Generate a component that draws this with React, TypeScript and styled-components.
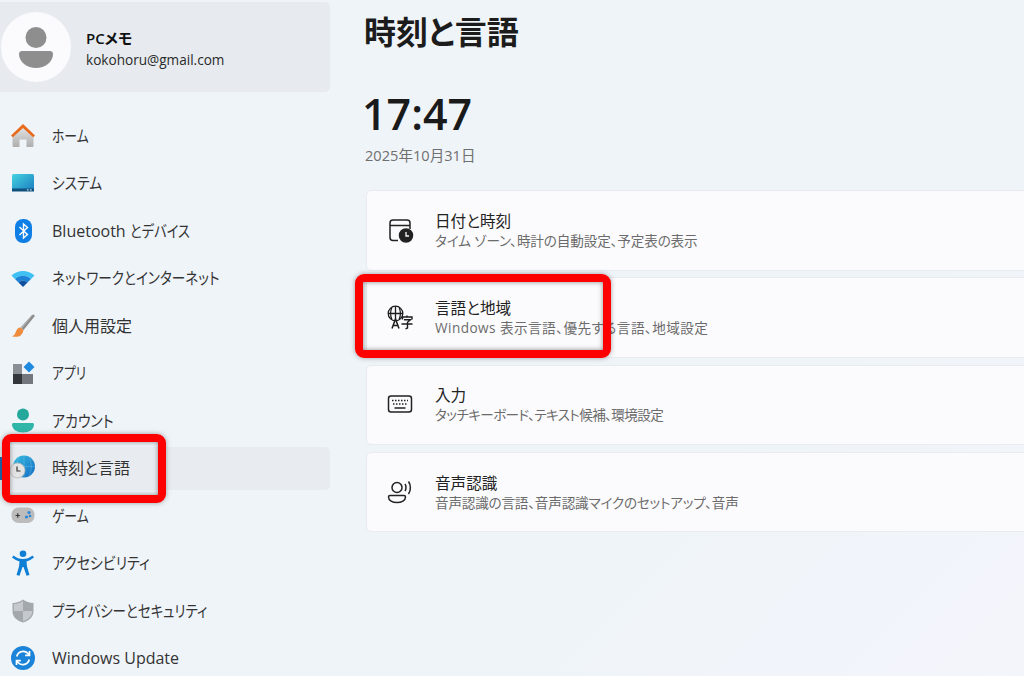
import styled, { createGlobalStyle } from 'styled-components';
import { ReactNode } from 'react';

const GlobalStyle = createGlobalStyle`
  html, body {
    margin: 0;
    padding: 0;
    overflow: hidden;
    background: #eff4f9;
  }
`;

const Shell = styled.div`
  position: relative;
  display: grid;
  grid-template-columns: 330px 1fr;
  width: 1024px;
  height: 676px;
  overflow: hidden;
  background: linear-gradient(135deg, #eff4f9 0%, #eff4f9 70%, #f3f5fb 100%);
  font-family: 'Open Sans', 'Noto Sans CJK JP', sans-serif;
  font-feature-settings: 'palt';
  color: #1b1b1b;
`;

const Sidebar = styled.aside`
  display: flex;
  flex-direction: column;
  padding-top: 2px;
`;

const Profile = styled.div`
  display: flex;
  align-items: center;
  gap: 15px;
  height: 90px;
  background: #e7ebef;
  border-radius: 0 5px 5px 0;
`;

const Avatar = styled.div`
  display: flex;
  align-items: center;
  justify-content: center;
  width: 70px;
  height: 70px;
  margin-left: 1px;
  border-radius: 50%;
  background: #fbfbfd;
`;

const ProfileText = styled.div`
  display: flex;
  flex-direction: column;
  gap: 2px;
  padding-top: 3px;
`;

const ProfileName = styled.div`
  font-size: 15px;
  font-weight: 600;
  line-height: 20px;
  color: #111;
`;

const ProfileMail = styled.div`
  font-size: 13.6px;
  line-height: 19px;
  color: #2a2a2a;
`;

const NavList = styled.nav`
  display: flex;
  flex-direction: column;
  margin-top: 20px;
`;

const NavRow = styled.div<{ $selected?: boolean }>`
  position: relative;
  display: flex;
  align-items: center;
  gap: 16px;
  height: 47.5px;
  padding-left: 10px;
  font-size: 16px;
  color: #333;
  box-sizing: border-box;
  ${(p) =>
    p.$selected &&
    `
    &::before {
      content: '';
      position: absolute;
      inset: 2px 0 2px 0;
      background: #e8ecf0;
      border-radius: 0 5px 5px 0;
    }
    &::after {
      content: '';
      position: absolute;
      left: 0;
      top: 12px;
      width: 2px;
      height: 23px;
      background: #0f5fb0;
    }
    & > * { position: relative; }
  `}
`;

const NavIcon = styled.span`
  display: flex;
  width: 26px;
  height: 26px;
  flex: none;
`;

const NavLabel = styled.span<{ $latin?: boolean }>`
  padding-bottom: ${(p) => (p.$latin ? '0' : '2px')};
  white-space: pre;
`;

// the reference font has much narrower kana than Noto, so squeeze those runs
const Kana = styled.span<{ $scale: number }>`
  display: inline-block;
  transform: scaleX(${(p) => p.$scale});
  transform-origin: left center;
`;

const Main = styled.main`
  display: flex;
  flex-direction: column;
  padding-left: 35px;
  overflow: hidden;
`;

const PageTitle = styled.h1`
  margin: 10px 0 0 -1px;
  font-size: 32px;
  font-weight: 600;
  line-height: 44px;
  color: #1c1c1c;
`;

const Clock = styled.div`
  margin: 31px 0 0 -3px;
  font-size: 43px;
  font-weight: 600;
  line-height: 58px;
  color: #1a1a1a;
`;

const DateText = styled.div`
  margin-top: 2px;
  font-size: 14.6px;
  line-height: 20px;
  color: #6f6f6f;
`;

const CardList = styled.div`
  display: flex;
  flex-direction: column;
  gap: 6.8px;
  margin: 25px 0 0 1px;
`;

const Card = styled.div`
  display: flex;
  align-items: center;
  gap: 21px;
  flex: none;
  width: 720px;
  height: 80.5px;
  padding-left: 20px;
  box-sizing: border-box;
  background: #fbfbfd;
  border: 1px solid #e8ebef;
  border-radius: 5px;
`;

const CardIcon = styled.span`
  display: flex;
  width: 27px;
  height: 27px;
  flex: none;
`;

const CardText = styled.div`
  display: flex;
  flex-direction: column;
`;

const CardTitle = styled.div`
  font-size: 15.6px;
  line-height: 21px;
  color: #222;
`;

const CardSub = styled.div<{ $track: number }>`
  font-size: 13.6px;
  line-height: 18px;
  letter-spacing: ${(p) => p.$track}px;
  color: #6b6b6b;
`;

const RedFrame = styled.div<{ $x: number; $y: number; $w: number; $h: number }>`
  position: absolute;
  left: ${(p) => p.$x}px;
  top: ${(p) => p.$y}px;
  width: ${(p) => p.$w}px;
  height: ${(p) => p.$h}px;
  box-sizing: border-box;
  border: 8px solid #fe0000;
  border-radius: 9px;
  box-shadow: 0 0 5px rgba(90, 90, 90, 0.55), inset 0 0 5px rgba(70, 70, 70, 0.6);
  pointer-events: none;
`;

const HomeIcon = () => (
  <svg viewBox="0 0 26 26" width="26" height="26">
    <defs>
      <linearGradient id="homeBody" x1="0" y1="0" x2="0" y2="1">
        <stop offset="0" stopColor="#e6e6e6" />
        <stop offset="1" stopColor="#aeaeae" />
      </linearGradient>
    </defs>
    <path d="M2.500 12 13 3l10.500 9v11a1 1 0 0 1-1 1H16.500V16.500h-7V24H3.500a1 1 0 0 1-1-1z" fill="url(#homeBody)" />
    <path d="M1 12.500 13 1l12 11.500-1.800 1.800L13 5 2.800 14.300z" fill="#ea6a1c" />
  </svg>
);

const SystemIcon = () => (
  <svg viewBox="0 0 26 26" width="26" height="26">
    <defs>
      <linearGradient id="sysScreen" x1="0" y1="0" x2="1" y2="1">
        <stop offset="0" stopColor="#45d3e0" />
        <stop offset="1" stopColor="#1a7cc0" />
      </linearGradient>
    </defs>
    <rect x="2" y="4" width="22" height="17" rx="1.500" fill="url(#sysScreen)" />
    <rect x="2" y="18.500" width="22" height="3" fill="#10507f" />
    <rect x="17" y="19.300" width="1.600" height="1.200" fill="#cfe4f0" />
    <rect x="20" y="19.300" width="1.600" height="1.200" fill="#cfe4f0" />
  </svg>
);

const BluetoothIcon = () => (
  <svg viewBox="0 0 26 26" width="26" height="26">
    <rect x="5" y="1" width="17" height="24" rx="8" fill="#0f7fe6" />
    <path d="m9.500 9 8 7.500-4 3.500V6l4 3.500-8 7.500" fill="none" stroke="#fff" strokeWidth="1.400" />
  </svg>
);

const WifiIcon = () => (
  <svg viewBox="0 0 26 26" width="26" height="26">
    <path d="M1.500 10.500C8 4.500 18 4.500 24.500 10.500L21 14C16 9.800 10 9.800 5 14z" fill="#3fc0f2" />
    <path d="M5 14c5-4.200 11-4.200 16 0l-3.500 3.500c-3-2.300-6-2.300-9 0z" fill="#1d82d6" />
    <path d="M8.500 17.500c3-2.300 6-2.300 9 0L13 22z" fill="#11509e" />
  </svg>
);

const BrushIcon = () => (
  <svg viewBox="0 0 26 26" width="26" height="26">
    <path d="M23.500 1.500c1 .5 1.300 1.300 1 2L13.500 17l-3-2.500L22 2z" fill="#8c8c8c" />
    <path d="M23.500 1.500 10.500 14.500l1.200 1z" fill="#b9b9b9" />
    <path d="M10.200 14.500 13.500 17c-.5 3-2.500 6-5 6.500-2 .4-4.500.3-6.500-.3 2.500-.8 3-2.500 3.800-4.500.8-2 2.400-4.200 4.400-4.200z" fill="#ef8b3c" />
  </svg>
);

const AppsIcon = () => (
  <svg viewBox="0 0 26 26" width="26" height="26">
    <rect x="3" y="4" width="9" height="10" fill="#8a8f96" />
    <rect x="3" y="14" width="9" height="10" fill="#33363b" />
    <rect x="12" y="14" width="11" height="10" fill="#74787e" />
    <path d="m19 1.500 5.500 5.500-5.500 5.500L13.500 7z" fill="#1f8be0" />
  </svg>
);

const AccountIcon = () => (
  <svg viewBox="0 0 26 26" width="26" height="26">
    <circle cx="13" cy="6.500" r="6" fill="#24a89c" />
    <path d="M3.500 15h19c.8 0 1.500.6 1.500 1.500 0 5-5 8-11 8s-11-3-11-8c0-.9.700-1.500 1.500-1.500z" fill="#2fb6a8" />
  </svg>
);

const TimeIcon = () => (
  <svg viewBox="0 0 26 26" width="26" height="26">
    <defs>
      <linearGradient id="globe" x1="0" y1="0" x2="1" y2="1">
        <stop offset="0" stopColor="#35bfe0" />
        <stop offset="1" stopColor="#1569c4" />
      </linearGradient>
    </defs>
    <circle cx="14" cy="11.500" r="11" fill="url(#globe)" />
    <path d="M14 .500v22M3 11.500h22M9 2c-3 6-3 13 0 19M19 2c3 6 3 13 0 19" fill="none" stroke="#7fcbe6" strokeWidth=".6" opacity=".6" />
    <circle cx="7.500" cy="15.500" r="7.500" fill="#e4e4e4" stroke="#b5b5b5" strokeWidth=".8" />
    <path d="M7 11.500v4.500h3.500" fill="none" stroke="#333" strokeWidth="1.200" />
  </svg>
);

const GameIcon = () => (
  <svg viewBox="0 0 26 26" width="26" height="26">
    <rect x="1.500" y="4.500" width="23" height="15.500" rx="7" fill="#bcbcbc" />
    <path d="M5.500 12.500h4.500M7.750 10.300v4.500" stroke="#3a3a3a" strokeWidth="1.200" />
    <circle cx="19" cy="9.500" r="1.600" fill="#2a86d8" />
    <circle cx="16.500" cy="14" r="1.600" fill="#2a86d8" />
    <circle cx="20" cy="13" r="1.300" fill="#2a86d8" />
  </svg>
);

const AccessIcon = () => (
  <svg viewBox="0 0 26 26" width="26" height="26">
    <circle cx="13" cy="3.800" r="3.300" fill="#0f7fd6" />
    <path d="M3.500 5.500c3 2.500 6 3.500 9.500 3.500s6.500-1 9.500-3.500l1.500 2c-2.500 2-5 3.300-7.500 4l.5 5 2.500 8.500-3 .8L13.500 17h-1L9.500 25.800l-3-.8L9 16.500l.5-5c-2.500-.7-5-2-7.500-4z" fill="#0f7fd6" />
  </svg>
);

const ShieldIcon = () => (
  <svg viewBox="0 0 26 26" width="26" height="26">
    <path d="M13 1.500c3 2.300 6.500 3.300 10.500 3.500v8.500c0 5-4 9-10.500 11-6.500-2-10.500-6-10.500-11V5c4-.2 7.500-1.200 10.500-3.500z" fill="#a3a8ad" />
    <path d="M13 2.800V13H3.800V6.200c3.500-.3 6.500-1.300 9.200-3.400zM13 13h9.200v.5c0 4.400-3.500 7.900-9.200 9.700z" fill="#c5c9cd" />
  </svg>
);

const UpdateIcon = () => (
  <svg viewBox="0 0 26 26" width="26" height="26">
    <circle cx="13" cy="13" r="12" fill="#1b83d8" />
    <path d="M6.800 11.500a6.500 6.500 0 0 1 11.200-3l1.500 1.600M19.500 6v4.300h-4.300M19.200 14.500a6.500 6.500 0 0 1-11.200 3l-1.500-1.600M6.500 20v-4.300h4.300" fill="none" stroke="#fff" strokeWidth="1.700" />
  </svg>
);

const CalendarClockIcon = () => (
  <svg viewBox="0 0 27 27" width="27" height="27" fill="none" stroke="#222" strokeWidth="1.500">
    <path d="M11 23.500H6a3 3 0 0 1-3-3V6a3 3 0 0 1 3-3h14a3 3 0 0 1 3 3v6M3 8.500h20" />
    <circle cx="19" cy="18.500" r="6.500" fill="#222" />
    <path d="M19 15v4h3" stroke="#fbfbfd" strokeWidth="1.300" />
  </svg>
);

const LanguageIcon = () => (
  <svg viewBox="0 0 27 27" width="27" height="27" fill="none" stroke="#1c1c1c" strokeWidth="1.300">
    <circle cx="8.500" cy="9.500" r="7.300" />
    <path d="M1.200 9.500h14.600M8.500 2.200v14.600M4.800 3.500c-1.600 4-1.600 8 0 12M12.200 3.500c1.600 4 1.600 8 0 12" />
    <path d="M5 24.500l3.500-9.500 3.500 9.500M6 21.500h5" fill="#fbfbfd" strokeWidth="1.500" />
    <path d="M20 11.500v1.500M15.500 15.500v-2.500h9.500v2.500M17 15.800h6.500l-3 2.500v5.700l-2 .8M14.500 20h11" strokeWidth="1.400" />
  </svg>
);

const KeyboardIcon = () => (
  <svg viewBox="0 0 27 27" width="27" height="27" fill="none" stroke="#222">
    <rect x="1.500" y="5" width="23" height="16" rx="2.500" strokeWidth="1.500" />
    <path d="M5 9.500h16M6 13h14" strokeWidth="1.500" strokeDasharray="1.500 1.500" />
    <path d="M7.500 17h11" strokeWidth="1.500" />
  </svg>
);

const SpeechIcon = () => (
  <svg viewBox="0 0 27 27" width="27" height="27" fill="none" stroke="#222" strokeWidth="1.500">
    <circle cx="10" cy="8.500" r="5" />
    <path d="M3 16.500h14c1 0 1.500.6 1.500 1.500 0 3.500-4 5.500-8.500 5.500S1.500 21.500 1.500 18c0-.9.500-1.500 1.500-1.500z" />
    <path d="M18 5c1.300 1.700 1.300 5.300 0 7M21.500 2.500c2.500 3.500 2.500 9 0 12.500" />
  </svg>
);

const navItems: {
  label?: string;
  kana?: string;
  scale?: number;
  icon: ReactNode;
  selected?: boolean;
  latin?: boolean;
}[] = [
  { kana: 'ホーム', scale: 0.8, icon: <HomeIcon /> },
  { kana: 'システム', scale: 0.86, icon: <SystemIcon /> },
  { label: 'Bluetooth ', kana: 'とデバイス', scale: 0.83, icon: <BluetoothIcon /> },
  { kana: 'ネットワークとインターネット', scale: 0.85, icon: <WifiIcon /> },
  { label: '個人用設定', icon: <BrushIcon /> },
  { kana: 'アプリ', scale: 0.8, icon: <AppsIcon /> },
  { kana: 'アカウント', scale: 0.87, icon: <AccountIcon /> },
  { label: '時刻と言語', icon: <TimeIcon />, selected: true },
  { kana: 'ゲーム', scale: 0.8, icon: <GameIcon /> },
  { kana: 'アクセシビリティ', scale: 0.87, icon: <AccessIcon /> },
  { kana: 'プライバシーとセキュリティ', scale: 0.84, icon: <ShieldIcon /> },
  { label: 'Windows Update', latin: true, icon: <UpdateIcon /> },
];

const cards = [
  { title: '日付と時刻', sub: 'タイム ゾーン、時計の自動設定、予定表の表示', track: -0.14, icon: <CalendarClockIcon /> },
  { title: '言語と地域', sub: 'Windows 表示言語、優先する言語、地域設定', track: 0.45, icon: <LanguageIcon /> },
  { title: '入力', sub: 'タッチキーボード、テキスト候補、環境設定', track: -0.6, icon: <KeyboardIcon /> },
  { title: '音声認識', sub: '音声認識の言語、音声認識マイクのセットアップ、音声', track: -0.2, icon: <SpeechIcon /> },
];

const App = () => (
  <Shell>
    <GlobalStyle />
    <Sidebar>
      <Profile>
        <Avatar>
          <svg viewBox="0 0 36 46" width="36" height="46">
            <circle cx="18" cy="13.500" r="10.500" fill="#8e8e8e" />
            <path d="M4 27h28c1.500 0 3 1.200 3 3 0 8-8 14-17 14S1 38 1 30c0-1.800 1.500-3 3-3z" fill="#8e8e8e" />
          </svg>
        </Avatar>
        <ProfileText>
          <ProfileName>PCメモ</ProfileName>
          <ProfileMail>kokohoru@gmail.com</ProfileMail>
        </ProfileText>
      </Profile>
      <NavList>
        {navItems.map((item) => (
          <NavRow key={(item.label ?? '') + (item.kana ?? '')} $selected={item.selected}>
            <NavIcon>{item.icon}</NavIcon>
            <NavLabel $latin={item.latin}>
              {item.label}
              {item.kana && <Kana $scale={item.scale ?? 1}>{item.kana}</Kana>}
            </NavLabel>
          </NavRow>
        ))}
      </NavList>
    </Sidebar>
    <Main>
      <PageTitle>時刻と言語</PageTitle>
      <Clock>17:47</Clock>
      <DateText>2025年10月31日</DateText>
      <CardList>
        {cards.map((card) => (
          <Card key={card.title}>
            <CardIcon>{card.icon}</CardIcon>
            <CardText>
              <CardTitle>{card.title}</CardTitle>
              <CardSub $track={card.track}>{card.sub}</CardSub>
            </CardText>
          </Card>
        ))}
      </CardList>
    </Main>
    <RedFrame $x={2} $y={434} $w={164} $h={69} />
    <RedFrame $x={355} $y={274} $w={256} $h={84} />
  </Shell>
);

export default App;
